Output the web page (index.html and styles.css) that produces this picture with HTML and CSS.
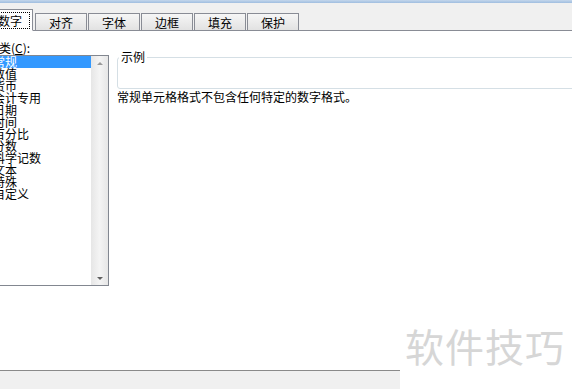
FILE: index.html
```html
<!DOCTYPE html>
<html lang="zh-CN">
<head>
<meta charset="utf-8">
<title>设置单元格格式</title>
<link rel="stylesheet" href="styles.css">
</head>
<body>
<div class="top"></div>
<div class="tabs">
  <div class="tab sel"><span class="focus">数字</span></div>
  <div class="tab">对齐</div>
  <div class="tab">字体</div>
  <div class="tab">边框</div>
  <div class="tab">填充</div>
  <div class="tab">保护</div>
</div>
<div class="panel">
  <div class="left">
    <div class="label">分类(<u>C</u>):</div>
    <div class="listbox">
      <ul class="items">
        <li class="cur">常规</li>
        <li>数值</li>
        <li>货币</li>
        <li>会计专用</li>
        <li>日期</li>
        <li>时间</li>
        <li>百分比</li>
        <li>分数</li>
        <li>科学记数</li>
        <li>文本</li>
        <li>特殊</li>
        <li>自定义</li>
      </ul>
      <div class="scroll">
        <span class="arrow up"></span>
        <span class="arrow down"></span>
      </div>
    </div>
  </div>
  <div class="right">
    <fieldset class="sample"><legend>示例</legend></fieldset>
    <p class="desc">常规单元格格式不包含任何特定的数字格式。</p>
  </div>
</div>
<div class="footer"></div>
<div class="watermark">软件技巧</div>
</body>
</html>
```
FILE: styles.css
```css
html, body {
  margin: 0;
  padding: 0;
  background: #ffffff;
  overflow: hidden;
}
body {
  width: 572px;
  height: 389px;
  position: relative;
  font-family: "Noto Sans CJK SC", "Noto Sans", sans-serif;
  font-size: 12px;
  color: #000;
}
.top {
  height: 3px;
  background: linear-gradient(#c4d7ec, #9fbddf);
}
.tabs {
  background: #f0f0f0;
  border-bottom: 1px solid #898c95;
  display: flex;
  align-items: flex-end;
  box-sizing: border-box;
  height: 28px;
}
.tab {
  box-sizing: border-box;
  width: 52px;
  height: 18px;
  margin-left: 1px;
  margin-bottom: -1px;
  border: 1px solid #898c95;
  background: linear-gradient(#f6f6f6, #e2e2e2);
  display: flex;
  align-items: center;
  justify-content: center;
  line-height: 14px;
  padding-top: 1px;
}
.tab.sel {
  width: 54px;
  margin-left: -21px;
  margin-right: 1px;
  height: 22px;
  border-bottom: 1px solid #fff;
  background: #fff;
  justify-content: flex-end;
  padding-right: 2px;
  position: relative;
  z-index: 1;
}
.focus {
  border: 1px dotted #000;
  padding: 0 7px 0 2px;
  line-height: 15px;
}
.panel {
  height: 339px;
  display: flex;
}
.left {
  width: 108px;
  flex: none;
}
.label {
  margin-top: 10px;
  margin-left: -13px;
  height: 14px;
  line-height: 14px;
  white-space: nowrap;
}
.listbox {
  box-sizing: border-box;
  margin-left: -10px;
  width: 119px;
  height: 231px;
  border: 1px solid #828790;
  display: flex;
}
.items {
  list-style: none;
  margin: 0;
  padding: 0;
  flex: 1;
  overflow: hidden;
}
.items li {
  height: 12px;
  line-height: 12px;
  padding-left: 2px;
  white-space: nowrap;
}
.items li.cur {
  background: #3399ff;
  color: #fff;
}
.scroll {
  width: 17px;
  flex: none;
  background: linear-gradient(90deg, #e6e6e6, #f4f4f4 50%, #e6e6e6);
  display: flex;
  flex-direction: column;
  justify-content: space-between;
  align-items: center;
  padding: 6px 0 5px;
  box-sizing: border-box;
}
.arrow {
  width: 0;
  height: 0;
  border-left: 3px solid transparent;
  border-right: 3px solid transparent;
}
.arrow.up { border-bottom: 3px solid #9a9a9a; }
.arrow.down { border-top: 3px solid #606060; }
.right {
  margin-left: 9px;
  flex: 1;
}
.sample {
  margin: 20px -40px 0 0;
  padding: 0;
  height: 38px;
  box-sizing: border-box;
  border: 1px solid #d5dfe5;
  border-radius: 3px;
}
.sample legend {
  padding: 0 2px;
  margin-left: 1px;
  line-height: 12px;
  font-size: 12px;
}
.desc {
  margin: 1px 0 0;
  line-height: 13px;
  white-space: nowrap;
}
.footer {
  width: 400px;
  height: 19px;
  box-sizing: border-box;
  border-top: 1px solid #8a8a8a;
  background: #f0f0f0;
}
.watermark {
  position: absolute;
  left: 405px;
  top: 322px;
  font-size: 39px;
  line-height: 46px;
  color: #d6d6d6;
  letter-spacing: 1px;
  white-space: nowrap;
}
```
